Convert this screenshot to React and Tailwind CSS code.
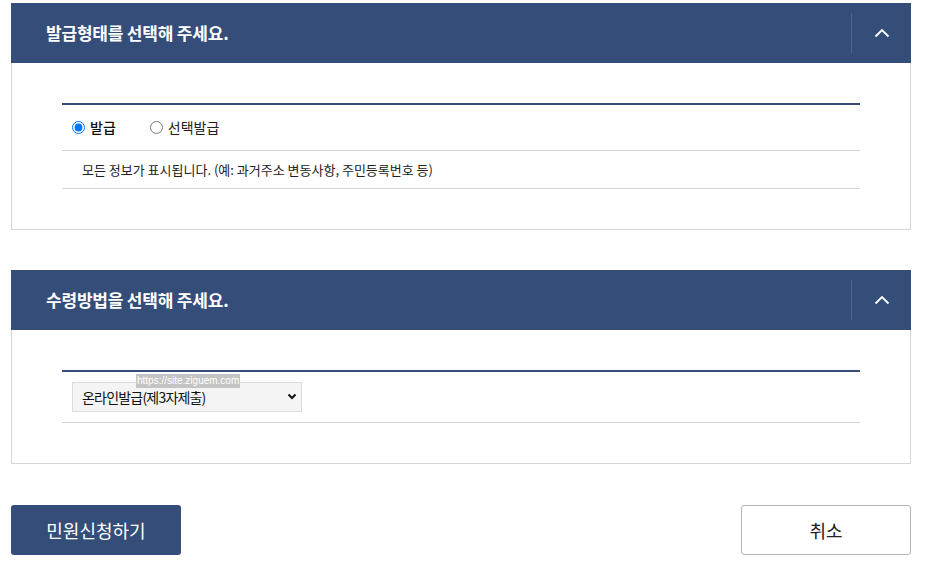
import React from "react";

const font = { fontFamily: '"Noto Sans CJK KR", "Noto Sans", sans-serif' };

const ChevronUp = () => (
  <svg width="16" height="10" viewBox="0 0 16 10" fill="none">
    <path d="M1.5 8.5 L8 2 L14.5 8.5" stroke="#fff" strokeWidth="1.8" />
  </svg>
);

const SectionHeader = ({ title }) => (
  <div className="flex h-[60px] items-center bg-[#344d79]">
    <h3 className="flex-1 pl-[35px] text-[17px] font-bold tracking-[-0.2px] text-white">
      {title}
    </h3>
    <div className="h-10 w-px bg-[#4b6390]" />
    <button className="flex h-full w-[59px] items-center justify-center" aria-label="접기">
      <ChevronUp />
    </button>
  </div>
);

export default function App() {
  return (
    <div className="min-h-[570px] bg-white pl-[11px] pr-[17px] pt-[3px] text-[#222]" style={font}>
      {/* 발급형태 */}
      <section>
        <SectionHeader title="발급형태를 선택해 주세요." />
        <div className="border border-t-0 border-[#d6d6d6] px-[50px] pb-[40px] pt-[40px]">
          <div className="border-t-2 border-[#344d79]">
            <div className="flex h-[46px] items-center border-b border-[#d6d6d6] pl-[10px]">
              <label className="flex items-center gap-[5px] text-[14px] font-medium text-[#111]">
                <input type="radio" name="type" defaultChecked className="m-0 h-[13px] w-[13px]" />
                발급
              </label>
              <label className="ml-[34px] flex items-center gap-[5px] text-[14px] text-[#222]">
                <input type="radio" name="type" className="m-0 h-[13px] w-[13px]" />
                선택발급
              </label>
            </div>
            <div className="flex h-[38px] items-center border-b border-[#d6d6d6] pl-[20px] text-[13px] text-[#222]">
              모든 정보가 표시됩니다. (예: 과거주소 변동사항, 주민등록번호 등)
            </div>
          </div>
        </div>
      </section>

      {/* 수령방법 */}
      <section className="mt-[40px]">
        <SectionHeader title="수령방법을 선택해 주세요." />
        <div className="border border-t-0 border-[#d6d6d6] px-[50px] pb-[40px] pt-[40px]">
          <div className="border-t-2 border-[#344d79]">
            <div className="relative flex h-[51px] items-center border-b border-[#d6d6d6] pl-[10px]">
              <div className="relative h-[30px] w-[230px]">
                <select
                  defaultValue="online3"
                  className="h-full w-full appearance-none border border-[#dcdcdc] bg-[#f4f4f4] pl-[9px] text-[14px] tracking-[-0.8px] text-[#111] outline-none"
                  style={font}
                >
                  <option value="online3">온라인발급(제3자제출)</option>
                  <option value="online">온라인발급(본인출력)</option>
                </select>
                <svg
                  className="pointer-events-none absolute right-[5px] top-[11px]"
                  width="10"
                  height="7"
                  viewBox="0 0 10 7"
                  fill="none"
                >
                  <path d="M1.5 1.5 L5 5 L8.5 1.5" stroke="#111" strokeWidth="2" />
                </svg>
              </div>
              <span
                className="absolute left-[74px] top-[2px] bg-[#c4c4c4] px-[1px] text-[10px] leading-[14px] text-white"
                style={{ fontFamily: '"Liberation Sans", Arial, sans-serif' }}
              >
                https://site.ziguem.com
              </span>
            </div>
          </div>
        </div>
      </section>

      {/* 버튼 */}
      <div className="mt-[41px] flex items-center justify-between">
        <button className="h-[50px] w-[170px] rounded-[3px] bg-[#344d79] text-[18px] text-white">
          민원신청하기
        </button>
        <button className="h-[50px] w-[170px] rounded-[3px] border border-[#b4b4b4] bg-white text-[18px] text-[#222]">
          취소
        </button>
      </div>
    </div>
  );
}
